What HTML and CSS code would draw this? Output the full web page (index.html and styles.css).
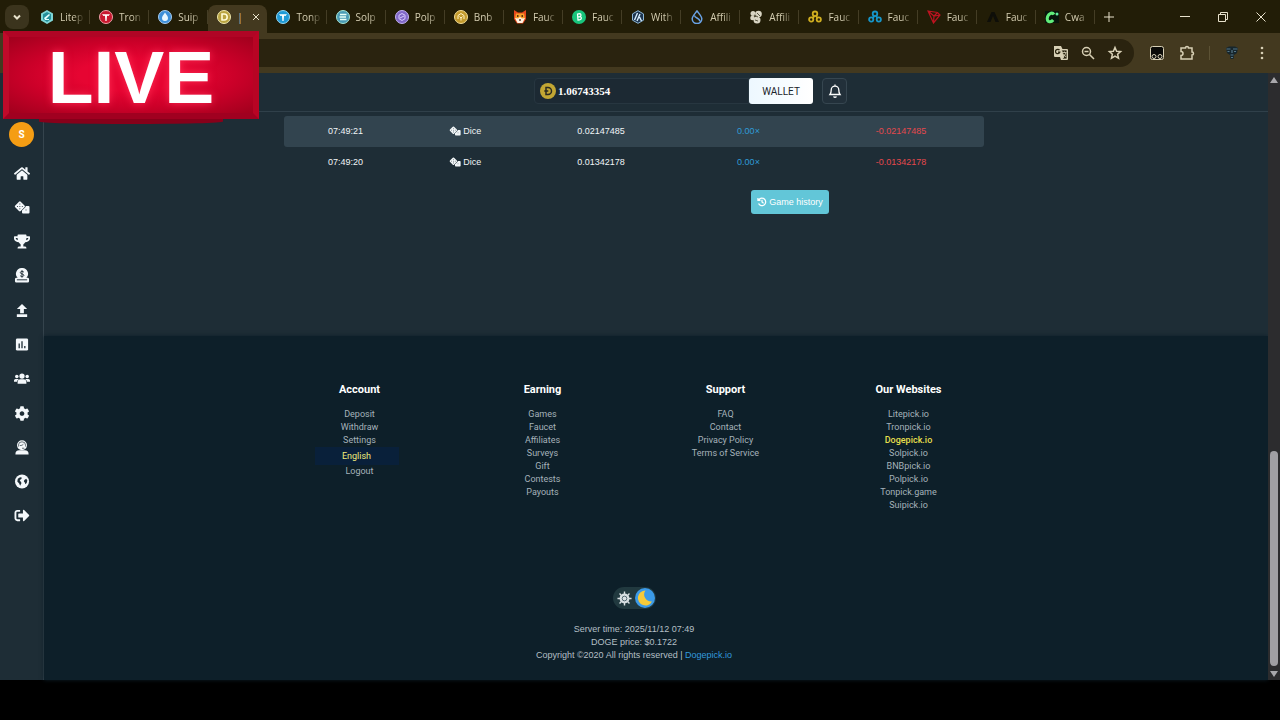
FILE: index.html
```html
<!DOCTYPE html>
<html lang="en">
   <head>
      <meta charset="utf-8">
      <title>Dogepick.io</title>
      <link rel="stylesheet" href="styles.css">
   </head>
   <body>
      <svg class="sprite" aria-hidden="true">
         <symbol id="dice" viewBox="0 0 32 26">
            <path fill-rule="evenodd" d="M10 1.500a2.500 2.500 0 0 1 3.500 0l7.500 7.600a2.500 2.500 0 0 1 0 3.500l-7.500 7.500a2.500 2.500 0 0 1-3.500 0L2.500 12.600a2.500 2.500 0 0 1 0-3.500zM11.700 5a1 1 0 1 0 .1 0zM7 9.800a1 1 0 1 0 .1 0zM11.700 9.800a1 1 0 1 0 .1 0zM16.500 9.800a1 1 0 1 0 .1 0zM11.700 14.600a1 1 0 1 0 .1 0z"/>
            <path fill-rule="evenodd" d="M23.500 10H29a2 2 0 0 1 2 2v11a2 2 0 0 1-2 2H18a2 2 0 0 1-2-2v-4l6.200-6.200q1.300-1.300 1.300-2.800zM24 17a1 1 0 1 0 .1 0z"/>
         </symbol>
         <symbol id="tron" viewBox="0 0 14 14">
            <path d="M3 4.200h8L9.500 6 8 5.700 7.600 11H6.400L6 5.700 4.500 6z" fill="#fff"/>
         </symbol>
         <symbol id="trio" viewBox="0 0 14 14">
            <g fill="none" stroke="currentColor" stroke-width="1.800"><circle cx="7" cy="3.800" r="2.300"/><circle cx="3.200" cy="9.500" r="2.100"/><circle cx="10.800" cy="9.500" r="2.100"/><path d="M6.500 6L4.500 8M8 6l1.500 2"/></g>
         </symbol>
      </svg>

      <div class="browser">
         <div class="tabstrip">
            <button class="tab-search" aria-label="Search tabs"><svg viewBox="0 0 10 10"><path d="M2 3.500l3 3 3-3"/></svg></button>
            <div class="tabs">
               <div class="tab"><svg viewBox="0 0 14 14"><path d="M7 0l6 3.500v7L7 14l-6-3.500v-7z" fill="#7fd6d6"/><path d="M7 2l4 2.300v5L7 12l-4-2.700v-5z" fill="#238f9b"/><path d="M4 8l5-4 1 1-4 4h3v1H5z" fill="#e5ffff"/></svg><span>Litep</span></div>
               <div class="tab"><svg viewBox="0 0 14 14"><circle cx="7" cy="7" r="6.500" fill="#c8182f" stroke="#f0a0a8"/><use href="#tron"/></svg><span>Tron</span></div>
               <div class="tab"><svg viewBox="0 0 14 14"><circle cx="7" cy="7" r="6.500" fill="#3d8ed8" stroke="#a8cdf0"/><path d="M7 2.500c2 3 3 4 3 5.500a3 3 0 0 1-6 0c0-1.500 1-2.500 3-5.500z" fill="#e8f6ff"/></svg><span>Suip</span></div>
               <div class="tab active"><svg viewBox="0 0 14 14"><circle cx="7" cy="7" r="6.500" fill="#b9a340" stroke="#efe7ae"/><path d="M5 4h2.200a3 3 0 0 1 0 6H5z" fill="none" stroke="#fffbd5" stroke-width="1.600"/></svg><span>|</span><button aria-label="Close tab"><svg viewBox="0 0 10 10"><path d="M2 2l6 6M8 2l-6 6"/></svg></button></div>
               <div class="tab"><svg viewBox="0 0 14 14"><circle cx="7" cy="7" r="6.500" fill="#1f9ad6" stroke="#94d8f5"/><use href="#tron"/></svg><span>Tonp</span></div>
               <div class="tab"><svg viewBox="0 0 14 14"><circle cx="7" cy="7" r="6.500" fill="#4a9bb5" stroke="#a6e5d5"/><path d="M4 4.500h6.500M3.500 7H10M4 9.500h6.500" stroke="#e5fff8" stroke-width="1.400"/></svg><span>Solp</span></div>
               <div class="tab"><svg viewBox="0 0 14 14"><circle cx="7" cy="7" r="6.500" fill="#8168c8" stroke="#c3b2f2"/><path d="M7 3.500l3 1.700v3.500L7 10.500 4 8.700V5.200zM5 8l4-2" fill="none" stroke="#d8ccff"/></svg><span>Polp</span></div>
               <div class="tab"><svg viewBox="0 0 14 14"><circle cx="7" cy="7" r="6.500" fill="#c39a2c" stroke="#f3dc96"/><path d="M4 9V5.500l3-2 3 2V9M5.500 6.500L7 8l1.500-1.500M7 8v2.500" fill="none" stroke="#fff2c4"/></svg><span>Bnb</span></div>
               <div class="tab"><svg viewBox="0 0 14 14"><path d="M1 0l4 2.500h4L13 0v9l-3 4.500H4L1 9z" fill="#e8481c"/><path d="M3 3.500h8l1 5-5 1-5-1z" fill="#f8a02a"/><path d="M2 8l3 .5L7 7l2 1.500 3-.5-2.500 5h-5z" fill="#fff1df"/><path d="M4 6h1.500M8.500 6H10M6.200 10h1.600" stroke="#301008" stroke-width="1.300"/></svg><span>Fauc</span></div>
               <div class="tab"><svg viewBox="0 0 14 14"><circle cx="7" cy="7" r="7" fill="#18c47c"/><path d="M5.500 4l2-.3c2 0 2 2.500.2 2.900 2.300 0 2.300 3-.2 3.200l-1.500.2zM6 6.900h2" fill="none" stroke="#fff" stroke-width="1.200"/></svg><span>Fauc</span></div>
               <div class="tab"><svg viewBox="0 0 14 14"><path d="M7 .7l5.500 3.200v6.300L7 13.300l-5.500-3.100V3.900z" fill="#1d3550" stroke="#8fb8d8"/><path d="M3.500 10l3-7M6 11l3-7M8.500 7l2 4" stroke="#d8efff" stroke-width="1.400"/></svg><span>With</span></div>
               <div class="tab"><svg viewBox="0 0 14 14"><path d="M7 1c3 3.800 4.800 5.500 4.800 7.800a4.800 4.800 0 0 1-9.600 0C2.200 6.500 4 4.800 7 1zM4.500 5.500c.5 3 5 2 5.500 6" fill="none" stroke="#6aa2e5" stroke-width="1.500"/></svg><span>Affili</span></div>
               <div class="tab"><svg viewBox="0 0 14 14"><g fill="#d9d5c3"><circle cx="4" cy="3.500" r="2.500"/><circle cx="9.500" cy="4" r="3.300"/><circle cx="3.500" cy="8" r="2.300"/><circle cx="8" cy="10" r="3.500"/></g><path d="M5 5l4 2M8 3l3 3M6 10l3 1" stroke="#5b5844"/></svg><span>Affili</span></div>
               <div class="tab gold"><svg viewBox="0 0 14 14"><use href="#trio"/></svg><span>Fauc</span></div>
               <div class="tab blue"><svg viewBox="0 0 14 14"><use href="#trio"/></svg><span>Fauc</span></div>
               <div class="tab"><svg viewBox="0 0 14 14"><path d="M1 1l9.500 1.500L13 5 6.500 13zM1 1l6 5 6-1M7 6l-.5 7M10.500 2.500L7 6" fill="none" stroke="#bd1320" stroke-width="1.200"/></svg><span>Fauc</span></div>
               <div class="tab"><svg viewBox="0 0 14 14"><path d="M1 12L5.500 2h3L13 12h-3.500L7 6l-2.500 6z" fill="#0e0e09"/></svg><span>Fauc</span></div>
               <div class="tab"><svg viewBox="0 0 14 14"><path d="M0 1h14v12H0z" fill="#07150c"/><path d="M9 4.500C7 1.500 2.500 4 2.200 8.500c0 4 4 4 6 1.500" fill="none" stroke="#61ee7b" stroke-width="3"/><circle cx="12" cy="4" r="1.500" fill="#61ee9b"/></svg><span>Cwa</span></div>
            </div>
            <div class="window-controls">
               <button class="new-tab" aria-label="New tab"><svg viewBox="0 0 10 10"><path d="M5 0v10M0 5h10"/></svg></button>
               <button aria-label="Minimize"><svg viewBox="0 0 10 10"><path d="M0 4.500h10"/></svg></button>
               <button aria-label="Restore"><svg viewBox="0 0 10 10"><path d="M.5 2.500h7v7h-7zM2.500 2.500V.5h7v7h-2"/></svg></button>
               <button aria-label="Close"><svg viewBox="0 0 10 10"><path d="M.5 .5l9 9M9.500 .5l-9 9"/></svg></button>
            </div>
         </div>

         <div class="toolbar">
            <div class="address">
               <input type="text" aria-label="Address">
               <button aria-label="Translate"><svg viewBox="0 0 16 16"><path d="M1 1h7l1.500 3H14a1 1 0 0 1 1 1v9a1 1 0 0 1-1 1H8l-1-3H2a1 1 0 0 1-1-1z" fill="#d8d0b5"/><path d="M8.500 5H14v9H9l2-2-2.500-7zM9.500 7.500h4M11.500 6.500v1M12.800 7.500c-.3 2-1.500 3.500-2.500 4M10.500 9l2.500 3" fill="#2a240f" stroke="#d8d0b5" stroke-width=".8"/><path d="M6.500 5.200a2.200 2.200 0 1 0 .3 2H5" fill="none" stroke="#2a240f" stroke-width="1.200"/></svg></button>
               <button aria-label="Zoom"><svg class="line" viewBox="0 0 16 16"><circle cx="6.500" cy="6.500" r="4"/><path d="M9.500 9.500L14 14M4.500 6.500h4"/></svg></button>
               <button aria-label="Bookmark"><svg class="line" viewBox="0 0 16 16"><path d="M8 2.500l1.600 3.700 4 .3-3 2.700.9 3.900L8 11l-3.500 2.100.9-3.900-3-2.700 4-.3z"/></svg></button>
            </div>
            <div class="extensions">
               <button aria-label="Tampermonkey"><svg viewBox="0 0 16 16"><rect x="1.500" y="1.500" width="13" height="13" rx="2" fill="#0b0b08" stroke="#d8d0b5"/><g fill="none" stroke="#d8d0b5"><circle cx="5" cy="11.500" r="2"/><circle cx="11" cy="11.500" r="2"/></g></svg></button>
               <button aria-label="Extensions"><svg class="line" viewBox="0 0 16 16"><path d="M2 3h4.500a1.500 1.500 0 0 1 3 0H13v4a1.500 1.500 0 0 1 0 3v4H2v-3.500a2 2 0 0 0 0-4z"/></svg></button>
               <i></i>
               <button aria-label="Profile"><svg viewBox="0 0 16 16"><path d="M2 3l3-1.500h6L14 3l-1 5-3 2-.5 4h-3L6 10 3 8z" fill="#17262c"/><path d="M2.500 4h4M9 4h4.500M3.500 6.500h2M10 6.500h2M8 5v3M6.500 10h3M7 12.500h2" stroke="#557687" stroke-width="1.200"/></svg></button>
               <button aria-label="Menu"><svg viewBox="0 0 16 16"><g fill="#d8d0b5"><circle cx="8" cy="3" r="1.300"/><circle cx="8" cy="8" r="1.300"/><circle cx="8" cy="13" r="1.300"/></g></svg></button>
            </div>
         </div>

         <div class="viewport">
            <nav class="sidebar">
               <a class="avatar" href="#profile">S</a>
               <ul>
                  <li><a href="#home" aria-label="Home"><svg viewBox="0 0 576 512"><path d="M280.370 148.260L96 300.110V464a16 16 0 0 0 16 16l112.060-.29a16 16 0 0 0 15.920-16V368a16 16 0 0 1 16-16h64a16 16 0 0 1 16 16v95.640a16 16 0 0 0 16 16.050L464 480a16 16 0 0 0 16-16V300L295.670 148.260a12.190 12.190 0 0 0-15.300 0zM571.600 251.470L488 182.560V44.050a12 12 0 0 0-12-12h-56a12 12 0 0 0-12 12v72.610L318.470 43a48 48 0 0 0-61 0L4.340 251.470a12 12 0 0 0-1.600 16.900l25.500 31A12 12 0 0 0 45.150 301l235.220-193.740a12.190 12.190 0 0 1 15.300 0L530.900 301a12 12 0 0 0 16.900-1.600l25.500-31a12 12 0 0 0-1.700-16.930z"/></svg></a></li>
                  <li><a href="#games" aria-label="Games"><svg viewBox="0 0 32 26"><use href="#dice"/></svg></a></li>
                  <li><a href="#contests" aria-label="Contests"><svg viewBox="0 0 576 512"><path d="M552 64H448V24c0-13.300-10.700-24-24-24H152c-13.300 0-24 10.700-24 24v40H24C10.700 64 0 74.700 0 88v56c0 35.700 22.500 72.400 61.900 100.700 31.500 22.700 69.800 37.100 110 41.700C203.300 338.500 240 360 240 360v72h-48c-35.300 0-64 20.700-64 56v12c0 6.600 5.400 12 12 12h296c6.600 0 12-5.400 12-12v-12c0-35.300-28.700-56-64-56h-48v-72s36.700-21.500 68.100-73.600c40.300-4.600 78.600-19 110-41.700 39.300-28.300 61.900-65 61.900-100.700V88c0-13.300-10.700-24-24-24zM99.300 192.800C74.900 175.200 64 155.600 64 144v-16h64.200c1 32.600 5.800 61.200 12.800 86.200-15.100-5.200-29.200-12.400-41.700-21.400zM512 144c0 16.100-17.700 36.100-35.300 48.800-12.500 9-26.700 16.200-41.800 21.400 7-25 11.800-53.600 12.800-86.200H512v16z"/></svg></a></li>
                  <li><a href="#deposit" aria-label="Deposit"><svg viewBox="0 0 16 16"><path d="M8 0a6.200 6.200 0 0 1 4.700 10.500H14a1.500 1.500 0 0 1 1.500 1.500v2a1.500 1.500 0 0 1-1.500 1.500H2A1.500 1.500 0 0 1 .5 14v-2A1.500 1.500 0 0 1 2 10.500h1.300A6.200 6.200 0 0 1 8 0z"/><path class="cut thin" d="M10 4.400C9 3.200 6.200 3.400 6.200 4.900c0 1.900 3.800 1 3.800 2.900 0 1.500-3 1.700-4 .4M8 2.300v8M2.500 12.600h11"/></svg></a></li>
                  <li><a href="#withdraw" aria-label="Withdraw"><svg viewBox="0 0 16 16"><path d="M8 1l5.500 5.500H10V11H6V6.500H2.500zM2.500 12h11v3h-11z"/></svg></a></li>
                  <li><a href="#stats" aria-label="Statistics"><svg viewBox="0 0 16 16"><rect x="1.500" y="1.500" width="13" height="13" rx="1.500"/><path class="cut" d="M5 7v5M8 4.500V12M11 9.500V12"/></svg></a></li>
                  <li><a href="#affiliates" aria-label="Affiliates"><svg viewBox="0 0 20 16"><circle cx="10" cy="5" r="3.300"/><circle cx="3.500" cy="5.500" r="2.200"/><circle cx="16.500" cy="5.500" r="2.200"/><path d="M4.500 14.500v-1.800A3.700 3.700 0 0 1 8.200 9h3.600a3.700 3.700 0 0 1 3.700 3.700v1.800zM0 12v-1.500a2 2 0 0 1 2-2h3l1 .5q-2 1.200-2.300 3zM20 12v-1.500a2 2 0 0 0-2-2h-3l-1 .5q2 1.200 2.300 3z"/></svg></a></li>
                  <li><a href="#settings" aria-label="Settings"><svg viewBox="0 0 512 512"><path d="M487.400 315.700l-42.600-24.600c4.300-23.200 4.300-47 0-70.200l42.600-24.600c4.900-2.800 7.100-8.600 5.500-14-11.100-35.600-30-67.800-54.700-94.600-3.800-4.100-10-5.100-14.800-2.300L380.800 110c-17.900-15.400-38.500-27.300-60.800-35.100V25.800c0-5.600-3.900-10.500-9.400-11.700-36.700-8.200-74.300-7.800-109.200 0-5.500 1.200-9.400 6.100-9.400 11.700V75c-22.200 7.900-42.800 19.800-60.800 35.100L88.700 85.500c-4.900-2.800-11-1.900-14.800 2.300-24.700 26.700-43.600 58.900-54.700 94.600-1.700 5.400.6 11.200 5.500 14L67.300 221c-4.300 23.200-4.300 47 0 70.200l-42.600 24.600c-4.900 2.800-7.100 8.600-5.500 14 11.100 35.600 30 67.800 54.700 94.600 3.800 4.100 10 5.100 14.800 2.300l42.600-24.600c17.900 15.400 38.500 27.300 60.800 35.100v49.200c0 5.600 3.900 10.500 9.400 11.700 36.700 8.200 74.300 7.800 109.200 0 5.500-1.200 9.400-6.100 9.400-11.700v-49.200c22.200-7.900 42.800-19.800 60.800-35.100l42.600 24.600c4.900 2.800 11 1.900 14.800-2.300 24.700-26.700 43.600-58.900 54.700-94.600 1.500-5.500-.7-11.300-5.600-14.100zM256 336c-44.100 0-80-35.900-80-80s35.900-80 80-80 80 35.900 80 80-35.900 80-80 80z"/></svg></a></li>
                  <li><a href="#support" aria-label="Support"><svg viewBox="0 0 16 16"><circle cx="8" cy="5.500" r="5.300"/><path d="M1 15.500V15a4 4 0 0 1 4-4h6a4 4 0 0 1 4 4v.5z"/><path class="cut hair" d="M4.200 7V5.500a3.800 3.600 0 0 1 7.600 0V7M5.500 6q3 0 4-1.500M8 8.800h2.500"/></svg></a></li>
                  <li><a href="#language" aria-label="Language"><svg viewBox="0 0 16 16"><circle cx="8" cy="8" r="7.500"/><path class="hole" d="M3.500 5L6 3.500l2 .5-1 1.500-1.500 1L6.500 8l1 1.500-1.500 3-1-2.500-2-2zM10.500 6.500l2-1.500 1.200 2-.7 2.500-1.500 1.500-.5-2-1-1z"/></svg></a></li>
                  <li><a href="#logout" aria-label="Logout"><svg viewBox="0 0 512 512"><path d="M497 273L329 441c-15 15-41 4.500-41-17v-96H152c-13.300 0-24-10.700-24-24v-96c0-13.300 10.700-24 24-24h136V88c0-21.400 25.900-32 41-17l168 168c9.300 9.400 9.300 24.600 0 34zM192 436v-40c0-6.600-5.400-12-12-12H96c-17.700 0-32-14.300-32-32V160c0-17.700 14.300-32 32-32h84c6.600 0 12-5.400 12-12V76c0-6.600-5.400-12-12-12H96c-53 0-96 43-96 96v192c0 53 43 96 96 96h84c6.600 0 12-5.400 12-12z"/></svg></a></li>
               </ul>
            </nav>

            <div class="page">
               <header class="topbar">
                  <div class="balance">
                     <svg viewBox="0 0 16 16"><circle cx="8" cy="8" r="8" fill="#c2a633"/><path d="M6 4.500h2a3.500 3.500 0 0 1 0 7H6zM4.300 8h4" fill="none" stroke="#2a2a20" stroke-width="1.500"/></svg>
                     <span>1.06743354</span>
                  </div>
                  <button class="wallet">WALLET</button>
                  <button class="bell" aria-label="Notifications"><svg viewBox="0 0 16 16"><path d="M3 11.500q1.200-1.500 1.200-4.500a3.800 3.800 0 0 1 7.600 0q0 3 1.200 4.500zM6.500 13.500q1.500 1.500 3 0M8 1.500v1.500"/></svg></button>
               </header>

               <main>
                  <table class="bets">
                     <colgroup><col class="time"><col class="game"><col class="amount"><col class="payout"><col class="profit"></colgroup>
                     <tr>
                        <td>07:49:21</td>
                        <td><svg viewBox="0 0 32 26"><use href="#dice"/></svg> Dice</td>
                        <td>0.02147485</td>
                        <td class="multiplier">0.00×</td>
                        <td class="loss">-0.02147485</td>
                     </tr>
                     <tr>
                        <td>07:49:20</td>
                        <td><svg viewBox="0 0 32 26"><use href="#dice"/></svg> Dice</td>
                        <td>0.01342178</td>
                        <td class="multiplier">0.00×</td>
                        <td class="loss">-0.01342178</td>
                     </tr>
                  </table>
                  <div class="history">
                     <button><svg viewBox="0 0 16 16"><path d="M3 4.500a6 6 0 1 1-.5 6M1.500 1.500v4h4M8 4.500V8l2.500 2"/></svg>Game history</button>
                  </div>
               </main>

               <footer>
                  <div class="links">
                     <section>
                        <h4>Account</h4>
                        <a href="#deposit">Deposit</a>
                        <a href="#withdraw">Withdraw</a>
                        <a href="#settings">Settings</a>
                        <select aria-label="Language"><option>English</option></select>
                        <a href="#logout">Logout</a>
                     </section>
                     <section>
                        <h4>Earning</h4>
                        <a href="#games">Games</a>
                        <a href="#faucet">Faucet</a>
                        <a href="#affiliates">Affiliates</a>
                        <a href="#surveys">Surveys</a>
                        <a href="#gift">Gift</a>
                        <a href="#contests">Contests</a>
                        <a href="#payouts">Payouts</a>
                     </section>
                     <section>
                        <h4>Support</h4>
                        <a href="#faq">FAQ</a>
                        <a href="#contact">Contact</a>
                        <a href="#privacy">Privacy Policy</a>
                        <a href="#terms">Terms of Service</a>
                     </section>
                     <section>
                        <h4>Our Websites</h4>
                        <a href="#litepick">Litepick.io</a>
                        <a href="#tronpick">Tronpick.io</a>
                        <a class="current" href="#dogepick">Dogepick.io</a>
                        <a href="#solpick">Solpick.io</a>
                        <a href="#bnbpick">BNBpick.io</a>
                        <a href="#polpick">Polpick.io</a>
                        <a href="#tonpick">Tonpick.game</a>
                        <a href="#suipick">Suipick.io</a>
                     </section>
                  </div>
                  <label class="theme">
                     <input type="checkbox" aria-label="Dark theme" checked>
                     <svg class="sun" viewBox="0 0 16 16"><circle cx="8" cy="8" r="4.500"/><path d="M8 .5v3M8 12.500v3M.5 8h3M12.500 8h3M2.700 2.700l2 2M11.300 11.300l2 2M13.300 2.700l-2 2M4.700 11.300l-2 2"/><circle class="core" cx="8" cy="8" r="2.500"/></svg>
                     <svg class="moon" viewBox="0 0 20 20"><circle cx="10" cy="10" r="10" fill="#3b9ae8"/><path d="M10.500 2.500a7.500 7.500 0 1 0 6.500 11A7 7 0 0 1 10.500 2.500z" fill="#f6ca39"/></svg>
                  </label>
                  <div class="legal">
                     <div>Server time: 2025/11/12 07:49</div>
                     <div>DOGE price: $0.1722</div>
                     <div>Copyright ©2020 All rights reserved | <a href="#home">Dogepick.io</a></div>
                  </div>
               </footer>
            </div>

            <div class="scrollbar">
               <svg viewBox="0 0 10 8"><path d="M5 1l4 6H1z"/></svg>
               <div class="track"><div class="thumb"></div></div>
               <svg viewBox="0 0 10 8"><path d="M5 7l4-6H1z"/></svg>
            </div>
         </div>
         <div class="live">LIVE</div>
      </div>
   </body>
</html>
```
FILE: styles.css
```css
* {
   box-sizing: border-box;
}
body {
   margin: 0;
   background: #000;
   color: #e8eef2;
   font: 9px/13px Roboto, "Liberation Sans", sans-serif;
}
a {
   color: inherit;
   text-decoration: none;
}
button {
   display: flex;
   align-items: center;
   justify-content: center;
   margin: 0;
   padding: 0;
   border: 0;
   background: none;
   color: inherit;
   font: inherit;
}
.sprite {
   position: absolute;
   width: 0;
   height: 0;
}
.browser {
   position: relative;
   display: flex;
   flex-direction: column;
   min-height: 100vh;
   padding-bottom: 40px;
}

/* tab strip */
.tabstrip {
   display: flex;
   height: 33px;
   background: #221d07;
   color: #d3ccb0;
}
.tabstrip button svg {
   width: 10px;
   height: 10px;
   fill: none;
   stroke: #e8e2cc;
}
.tab-search {
   width: 24px;
   height: 24px;
   margin: 5px 2px 0 5px;
   border-radius: 8px;
   background: #3b341d;
}
.tab-search svg path {
   stroke-width: 2;
}
.tabs {
   display: flex;
   flex: 1;
   min-width: 0;
}
.tab {
   position: relative;
   display: flex;
   flex: 1 1 0;
   align-items: center;
   gap: 6px;
   min-width: 0;
   padding: 0 4px 0 9px;
   font: 10px/16px "Open Sans", "Noto Sans", sans-serif;
}
.tab::after {
   content: "";
   position: absolute;
   right: 0;
   top: 10px;
   width: 1px;
   height: 14px;
   background: #443d25;
}
.tab > svg {
   flex: none;
   width: 14px;
   height: 14px;
}
.tab > span {
   flex: 1;
   white-space: nowrap;
   mask-image: linear-gradient(to right, #000 50%, rgba(0, 0, 0, .2) 85%);
}
.tab.active {
   padding-bottom: 5px;
   border-radius: 8px 8px 0 0;
   margin-top: 5px;
   background: #43391f;
}
.tab.active::after {
   display: none;
}
.tab.active > span {
   mask-image: none;
}
.tab.active button {
   width: 14px;
}
.tab.gold > svg {
   color: #d0ae20;
}
.tab.blue > svg {
   color: #1795c8;
}
.window-controls {
   display: flex;
   justify-content: flex-end;
   width: 185px;
}
.window-controls button {
   width: 38px;
}
.window-controls .new-tab {
   width: 28px;
   margin-right: auto;
}

/* address bar */
.toolbar {
   display: flex;
   align-items: center;
   height: 40px;
   padding-left: 110px;
   background: #43391f;
}
.address {
   display: flex;
   flex: 1;
   align-items: center;
   gap: 11px;
   height: 28px;
   padding-right: 11px;
   border-radius: 14px;
   background: #2a230f;
}
.address input {
   flex: 1;
   min-width: 0;
   border: 0;
   outline: 0;
   background: none;
}
.toolbar svg {
   width: 16px;
   height: 16px;
}
.toolbar .line {
   fill: none;
   stroke: #d8d0b5;
   stroke-width: 1.5;
}
.extensions {
   display: flex;
   align-items: center;
   gap: 14px;
   padding: 0 10px 0 15px;
}
.extensions i {
   width: 1px;
   height: 14px;
   background: #5c5235;
}

/* site */
.viewport {
   display: flex;
   flex: 1;
   background: #1e2d36;
}
.sidebar {
   display: flex;
   flex-direction: column;
   align-items: center;
   width: 44px;
   padding: 49px 0 155px;
   border-right: 1px solid #35444d;
}
.avatar {
   width: 25px;
   height: 25px;
   border-radius: 50%;
   background: #f59d14;
   color: #fff;
   font-size: 10px;
   font-weight: 700;
   line-height: 25px;
   text-align: center;
}
.sidebar ul {
   display: flex;
   flex: 1;
   flex-direction: column;
   justify-content: space-between;
   margin: 17px 0 0;
   padding: 0;
   list-style: none;
}
.sidebar li a {
   display: flex;
   align-items: center;
   justify-content: center;
   height: 18px;
}
.sidebar svg {
   width: 16px;
   height: 15px;
   fill: #f4f8fb;
}
.sidebar .cut {
   fill: none;
   stroke: #1e2d36;
   stroke-width: 1.4;
}
.sidebar .thin {
   stroke-width: 1;
}
.sidebar .hair {
   stroke-width: .7;
}
.sidebar .hole {
   fill: #1e2d36;
}
.page {
   display: flex;
   flex: 1;
   flex-direction: column;
   min-width: 0;
}
.topbar {
   display: flex;
   align-items: center;
   justify-content: center;
   height: 39px;
   padding: 0 0 2px 69px;
   border-bottom: 1px solid #30404a;
}
.balance {
   display: flex;
   align-items: center;
   gap: 2px;
   width: 215px;
   height: 26px;
   padding-left: 5px;
   border: 1px solid #273640;
   border-radius: 4px 0 0 4px;
   background: #1c2933;
   color: #fff;
   font: bold 11px/16px "Liberation Serif", serif;
}
.balance svg {
   width: 16px;
   height: 16px;
}
.wallet {
   width: 64px;
   height: 26px;
   border-radius: 3px;
   background: linear-gradient(to right, #edf8ff, #fff);
   color: #1a242b;
   font-size: 10px;
}
.bell {
   width: 25px;
   height: 26px;
   margin-left: 9px;
   border: 1px solid #364650;
   border-radius: 4px;
   background: #22303a;
}
.bell svg {
   width: 16px;
   height: 16px;
   fill: none;
   stroke: #fff;
   stroke-width: 1.3;
}
/* right padding makes up for the sidebar, so the content is centred on the window */
main {
   align-self: center;
   width: 100%;
   max-width: 744px;
   min-height: 224px;
   padding: 4px 44px 0 0;
}
.bets {
   width: 100%;
   table-layout: fixed;
   border-spacing: 0;
   color: #f1f5f7;
   font: 9px/13px "Liberation Sans", sans-serif;
   text-align: center;
}
.time {
   width: 123px;
}
.game {
   width: 116px;
}
.amount {
   width: 156px;
}
.payout {
   width: 139px;
}
.bets td {
   height: 31px;
   padding: 0 0 1px;
}
.bets tr:first-child td {
   background: #32444f;
}
.bets td:first-child {
   border-radius: 3px 0 0 3px;
}
.bets td:last-child {
   border-radius: 0 3px 3px 0;
}
.bets svg {
   width: 12px;
   height: 10px;
   fill: #f1f5f7;
   vertical-align: -2px;
}
.bets .multiplier {
   color: #2f9bd6;
}
.bets .loss {
   color: #e5484d;
}
.history {
   display: flex;
   justify-content: flex-end;
   padding: 12px 155px 0 0;
}
.history button {
   gap: 2px;
   width: 78px;
   height: 24px;
   border-radius: 3px;
   background: #62c6d8;
   color: #fff;
   font-family: "Liberation Sans", sans-serif;
}
.history svg {
   width: 10px;
   height: 10px;
   fill: none;
   stroke: #fff;
   stroke-width: 2;
}

footer {
   display: flex;
   flex: 1;
   flex-direction: column;
   align-items: center;
   padding: 46px 44px 0 0;
   background: #0d1f29;
   box-shadow: 0 0 4px #0d1f29;
   color: #a5b2ba;
   text-align: center;
}
.links {
   display: grid;
   grid-template-columns: repeat(4, 1fr);
   width: 100%;
   max-width: 732px;
   min-height: 205px;
}
.links section {
   display: flex;
   flex-direction: column;
   align-items: center;
}
.links h4 {
   margin: 0 0 10px;
   color: #fff;
   font-size: 11px;
   font-weight: 700;
   line-height: 16px;
}
.links .current {
   color: #e6df4c;
   font-weight: 500;
}
.links select {
   width: 84px;
   height: 18px;
   margin-right: 6px;
   padding: 0;
   border: 0;
   background: #09203a;
   color: #f0ec7a;
   font: inherit;
   text-align-last: center;
   appearance: none;
}
.theme {
   position: relative;
   display: flex;
   align-items: center;
   justify-content: space-between;
   width: 43px;
   height: 22px;
   padding: 0 1px 0 4px;
   border-radius: 11px;
   background: #21393f;
}
.theme input {
   position: absolute;
   inset: 0;
   margin: 0;
   opacity: 0;
}
.sun {
   width: 15px;
   height: 15px;
   fill: #d9e0e3;
   stroke: #d9e0e3;
   stroke-width: 1.5;
}
.sun .core {
   fill: none;
   stroke: #4b626b;
   stroke-width: 1;
}
.moon {
   width: 20px;
   height: 20px;
}
.legal {
   margin-top: 14px;
   color: #b4bfc5;
   font-family: "Liberation Sans", sans-serif;
}
.legal a {
   color: #3399dd;
}

.scrollbar {
   display: flex;
   flex-direction: column;
   align-items: center;
   width: 12px;
   padding: 3px 0 2px;
   background: #2c2c2e;
}
.scrollbar svg {
   width: 10px;
   height: 8px;
   fill: #a9a8ac;
}
.track {
   display: flex;
   flex: 1;
   align-items: flex-end;
   padding-bottom: 4px;
}
.thumb {
   width: 8px;
   height: 37%;
   border-radius: 4px;
   background: #a09fa3;
}

/* stream badge over the browser */
.live {
   position: absolute;
   left: 3px;
   top: 31px;
   width: 256px;
   height: 88px;
   border: 6px solid;
   border-color: #b00525 #b80424 #a00020 #c00a2a;
   background: radial-gradient(ellipse, #e60532 30%, #cc0029 60%, #a0001d);
   color: #fff;
   font: bold 75px/80px "Liberation Sans", sans-serif;
   text-align: center;
   text-shadow: 0 0 8px #ff2d55;
}
.live::after {
   content: "";
   position: absolute;
   left: 30px;
   right: 30px;
   bottom: -11px;
   height: 5px;
   border-radius: 0 0 50% 50%;
   background: #87001a;
}
```
